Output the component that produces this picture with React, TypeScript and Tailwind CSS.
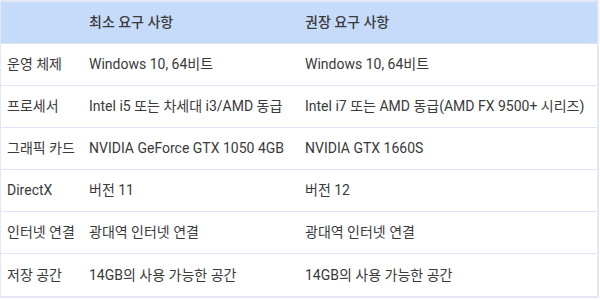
const rows = [
  ["운영 체제", "Windows 10, 64비트", "Windows 10, 64비트"],
  ["프로세서", "Intel i5 또는 차세대 i3/AMD 동급", "Intel i7 또는 AMD 동급(AMD FX 9500+ 시리즈)"],
  ["그래픽 카드", "NVIDIA GeForce GTX 1050 4GB", "NVIDIA GTX 1660S"],
  ["DirectX", "버전 11", "버전 12"],
  ["인터넷 연결", "광대역 인터넷 연결", "광대역 인터넷 연결"],
  ["저장 공간", "14GB의 사용 가능한 공간", "14GB의 사용 가능한 공간"],
];

export default function App() {
  return (
    <div
      className="w-[599px] h-[300px] bg-white text-[14px] text-[#3a3a3a]"
      style={{ fontFamily: 'Roboto, "Noto Sans CJK KR", sans-serif' }}
    >
      <div className="border-t-2 border-r-2 border-b-2 border-l border-[#e3e7f6]">
        <div className="grid grid-cols-[80px_216px_1fr] h-[42px] items-center bg-[#c6dbfa] border-b border-[#dbe2f4]">
          <div />
          <div className="pl-2 font-medium">최소 요구 사항</div>
          <div className="pl-2 font-medium">권장 요구 사항</div>
        </div>
        {rows.map((row, i) => (
          <div
            key={row[0]}
            className={
              "grid grid-cols-[80px_216px_1fr] h-[42px] items-center " +
              (i < rows.length - 1 ? "border-b border-[#dfe3f4]" : "")
            }
          >
            <div className="pl-[6px] whitespace-nowrap">{row[0]}</div>
            <div className="pl-2 whitespace-nowrap">{row[1]}</div>
            <div className="pl-2 whitespace-nowrap">{row[2]}</div>
          </div>
        ))}
      </div>
    </div>
  );
}
